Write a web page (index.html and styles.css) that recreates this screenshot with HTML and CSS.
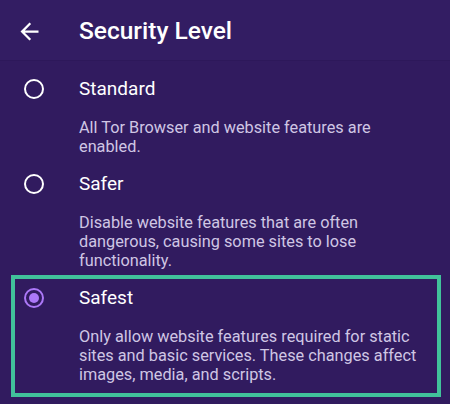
FILE: index.html
```html
<!DOCTYPE html>
<html lang="en">

<head>
  <meta charset="UTF-8" />
  <meta name="viewport" content="width=device-width, initial-scale=1.0" />
  <title>Security Level</title>
  <link rel="stylesheet" href="styles.css">
</head>

<body>
  <div class="screen">
    <div class="toolbar">
      <svg class="back-icon" viewBox="0 0 24 24">
        <path d="M20 11H7.83l5.59-5.59L12 4l-8 8 8 8 1.41-1.41L7.83 13H20v-2z" fill="#ffffff" />
      </svg>
      <p class="toolbar-title">Security Level</p>
    </div>

    <div class="option">
      <div class="radio"></div>
      <div class="option-text">
        <p class="option-title">Standard</p>
        <p class="option-desc">All Tor Browser and website features are enabled.</p>
      </div>
    </div>

    <div class="option">
      <div class="radio"></div>
      <div class="option-text">
        <p class="option-title">Safer</p>
        <p class="option-desc">Disable website features that are often dangerous, causing some sites to lose functionality.</p>
      </div>
    </div>

    <div class="option option-selected">
      <div class="radio radio-checked"></div>
      <div class="option-text">
        <p class="option-title">Safest</p>
        <p class="option-desc">Only allow website features required for static sites and basic services. These changes affect images, media, and scripts.</p>
      </div>
    </div>
  </div>
</body>

</html>
```

FILE: styles.css
```css
/* Reset */
p {
  margin: 0;
}

body {
  margin: 0;
  height: 404px;
  overflow: hidden;
  font-family: Roboto, "Noto Sans", sans-serif;
  background-color: #311b5f;
}

.screen {
  width: 450px;
  height: 404px;
  background-color: #311b5f;
  color: #ffffff;
}

/* Toolbar */
.toolbar {
  height: 61px;
  padding-top: 2px;
  padding-left: 16px;
  display: flex;
  align-items: center;
  background-color: #331d63;
  border-bottom: 1px solid #2d185a;
  box-sizing: border-box;
}

.back-icon {
  width: 27px;
  height: 27px;
}

.toolbar-title {
  margin-left: 36px;
  font-size: 24.5px;
  font-weight: 500;
  line-height: 28px;
}

/* Options */
.option {
  display: flex;
  align-items: flex-start;
  padding: 16px 20px 0 24px;
}

.radio {
  flex: none;
  width: 20px;
  height: 20px;
  margin-top: 2px;
  border: 2px solid #ffffff;
  border-radius: 50%;
  box-sizing: border-box;
  display: flex;
  align-items: center;
  justify-content: center;
}

.radio-checked {
  border-color: #ac78f8;
}

.radio-checked::before {
  content: "";
  width: 10px;
  height: 10px;
  border-radius: 50%;
  background-color: #ac78f8;
}

.option-text {
  margin-left: 35px;
}

.option-title {
  font-size: 19px;
  line-height: 24px;
}

.option-desc {
  margin-top: 17px;
  font-size: 16.3px;
  line-height: 19px;
  color: #cfc6e4;
}

/* Highlight box drawn over the selected row */
.option-selected {
  position: relative;
  padding-bottom: 20px;
}

.option-selected::after {
  content: "";
  position: absolute;
  left: 11px;
  right: 9px;
  top: 5px;
  bottom: 7px;
  border: 4px solid #41c29b;
}
```
